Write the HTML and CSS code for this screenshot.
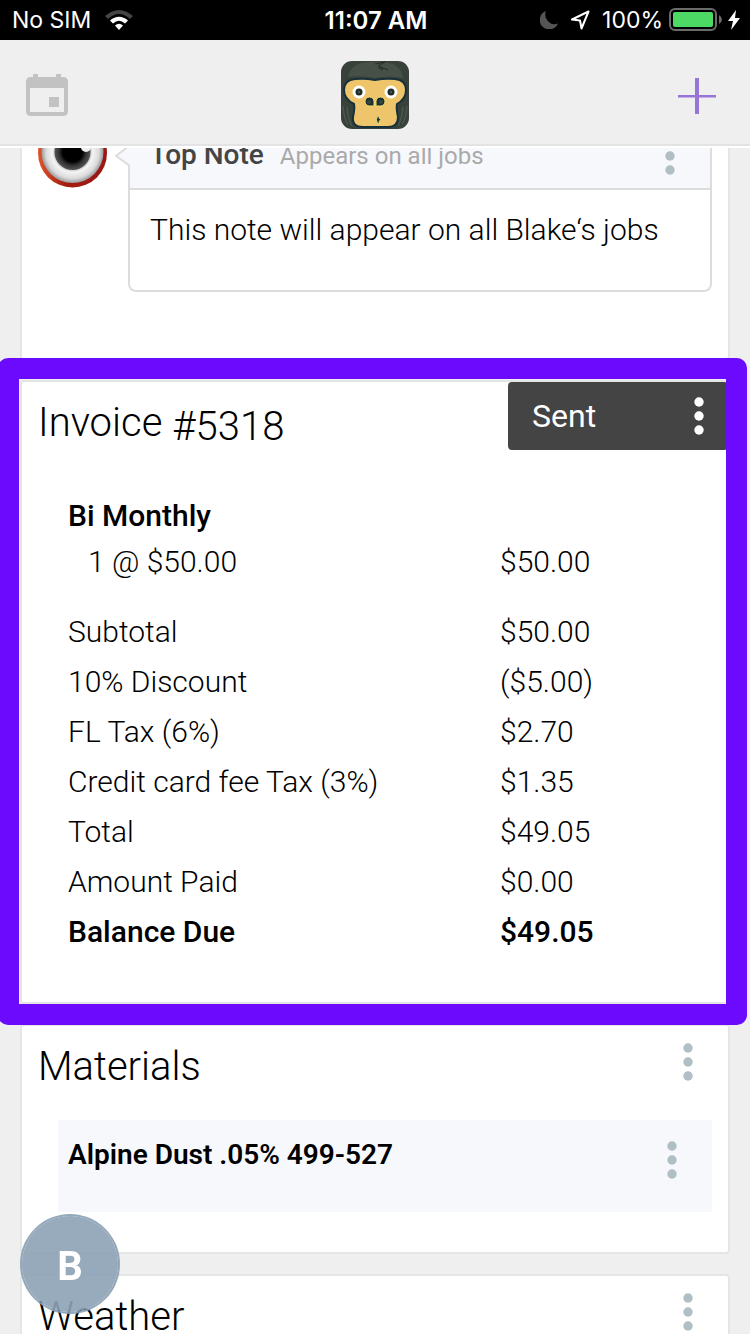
FILE: index.html
```html
<!DOCTYPE html>
<html lang="en">
<head>
    <meta charset="UTF-8">
    <meta name="viewport" content="width=device-width, initial-scale=1.0">
    <title>Job - Invoice #5318</title>
    <link rel="stylesheet" href="styles.css">
</head>
<body>
    <header class="top">
        <div class="status-bar">
            <div class="status-left">
                <span>No SIM</span>
                <svg width="28" height="21" viewBox="0 0 28 21">
                    <path d="M0 6 Q14 -6 28 6 L25 9 Q14 -1 3 9 Z" fill="#444"/>
                    <path d="M5 10.500 Q14 3 23 10.500 L20 13.500 Q14 8 8 13.500 Z" fill="#fff"/>
                    <path d="M10 15.500 Q14 12 18 15.500 L14 20 Z" fill="#fff"/>
                </svg>
            </div>
            <div class="status-time">11:07 AM</div>
            <div class="status-right">
                <svg class="moon" width="18" height="18" viewBox="0 0 18 18">
                    <path d="M6 0 A9.500 9.500 0 1 0 18 12.500 A9.500 9.500 0 0 1 6 0 Z" fill="#555"/>
                </svg>
                <svg width="20" height="20" viewBox="0 0 20 20">
                    <path d="M18.500 1.500 L2 9.500 L10 10.500 L11.500 18.500 Z" fill="none" stroke="#fff" stroke-width="2" stroke-linejoin="round"/>
                </svg>
                <span class="battery-level">100%</span>
                <svg width="53" height="24" viewBox="0 0 53 24">
                    <rect x="1" y="1" width="46" height="21" rx="5" fill="none" stroke="#6b6b6b" stroke-width="2"/>
                    <rect x="4" y="4" width="40" height="15" rx="2" fill="#4cd964"/>
                    <path d="M50 7 Q53 9 53 11.500 Q53 14 50 16 Z" fill="#6b6b6b"/>
                </svg>
                <svg width="12" height="20" viewBox="0 0 12 20">
                    <path d="M8 0 L0 11 H5 L3 20 L12 8 H7 Z" fill="#fff"/>
                </svg>
            </div>
        </div>
        <nav class="app-bar">
            <button class="icon-button" type="button" aria-label="Calendar">
                <svg width="42" height="42" viewBox="0 0 42 42" fill="#c2c2c2">
                    <path fill-rule="evenodd" d="M7 0 H12 V3 H30 V0 H35 V3 H37 Q42 3 42 8 V37 Q42 42 37 42 H5 Q0 42 0 37 V8 Q0 3 5 3 H7 Z M4 14 V38 H38 V14 Z"/>
                    <rect x="23" y="23" width="10" height="10"/>
                </svg>
            </button>
            <a class="logo" href="#" aria-label="Home">
                <svg width="68" height="68" viewBox="0 0 68 68">
                    <rect width="68" height="68" rx="11" fill="#38423a"/>
                    <path d="M7 16 Q10 1 30 1 H42 Q60 2 62 17 Q50 14 34 17 Q18 14 7 16 Z" fill="#475047"/>
                    <path d="M2 45 Q3 58 7 63 M6 46 Q7 58 11 65 M66 45 Q65 58 61 63 M62 46 Q61 58 57 65" fill="none" stroke="#4c564d" stroke-width="1.500"/>
                    <path d="M34 3 L44 1 L37 5 L47 9 M37 7 L42 8 L40 10" fill="none" stroke="#262d2a" stroke-width="1"/>
                    <path d="M14 18 Q24 17 34 19 Q44 17 54 18 Q65 19 65 29 Q65 38 56 43 Q55 47 57 56 Q57 66 47 66 H22 Q11 66 12 56 Q14 47 13 43 Q3 38 3 29 Q3 19 14 18 Z" fill="#eec56b" stroke="#17313c" stroke-width="2"/>
                    <circle cx="18" cy="31" r="6.500" fill="#fff"/>
                    <circle cx="50" cy="31" r="6.500" fill="#fff"/>
                    <circle cx="18" cy="31" r="3.500" fill="#202c29"/>
                    <circle cx="50" cy="31" r="3.500" fill="#202c29"/>
                    <circle cx="18" cy="31" r="1" fill="#5b6662"/>
                    <circle cx="50" cy="31" r="1" fill="#5b6662"/>
                    <path d="M33 45 H28.500 A4.500 4.500 0 1 1 33 40.500 Z M35 45 H39.500 A4.500 4.500 0 1 0 35 40.500 Z" fill="#1d3135" stroke="#f3e16d" stroke-width="1"/>
                    <circle cx="28" cy="41" r="2" fill="#38453f"/>
                    <circle cx="40" cy="41" r="2" fill="#38453f"/>
                    <path d="M39 54.500 A4.300 4.300 0 0 0 39 63 L38 60.500 L40 58.500 L38 57 Z" fill="#1d3135" stroke="#f3e16d" stroke-width="1"/>
                </svg>
            </a>
            <button class="icon-button add-button" type="button" aria-label="Add">
                <svg width="38" height="38" viewBox="0 0 38 38" fill="#9775d6">
                    <rect x="17" y="2" width="4" height="36"/>
                    <rect x="0" y="19" width="38" height="2.500"/>
                </svg>
            </button>
        </nav>
    </header>

    <main class="content">
        <section class="card note-card">
            <svg class="note-avatar" width="70" height="70" viewBox="0 0 70 70">
                <defs>
                    <radialGradient id="ball">
                        <stop offset="0.500" stop-color="#999"/>
                        <stop offset="0.650" stop-color="#f4f4f4"/>
                        <stop offset="0.850" stop-color="#dcdcdc"/>
                        <stop offset="1" stop-color="#9a9a9a"/>
                    </radialGradient>
                    <radialGradient id="pupil">
                        <stop offset="0.550" stop-color="#000"/>
                        <stop offset="0.750" stop-color="#333"/>
                        <stop offset="1" stop-color="#555"/>
                    </radialGradient>
                    <linearGradient id="rim">
                        <stop offset="0" stop-color="#e0552c"/>
                        <stop offset="0.400" stop-color="#a31c0e"/>
                        <stop offset="1" stop-color="#9a1717"/>
                    </linearGradient>
                </defs>
                <circle cx="34.500" cy="35" r="34.500" fill="url(#rim)"/>
                <circle cx="34.500" cy="34" r="31" fill="url(#ball)"/>
                <circle cx="34.500" cy="34" r="18" fill="url(#pupil)"/>
                <circle cx="48" cy="29" r="5" fill="#eee"/>
            </svg>
            <article class="note">
                <svg class="note-arrow" width="16" height="24" viewBox="0 0 16 24">
                    <path d="M16 1 L2 12 L16 22" fill="#f7f8fc" stroke="#dcdcdc" stroke-width="2"/>
                </svg>
                <div class="note-header">
                    <h3 class="note-title">Top Note</h3>
                    <span class="note-hint">Appears on all jobs</span>
                    <button class="dots" type="button" aria-label="Note options">
                        <svg width="10" height="38" viewBox="0 0 10 38"><circle cx="5" cy="5" r="4.700"/><circle cx="5" cy="19" r="4.700"/><circle cx="5" cy="33" r="4.700"/></svg>
                    </button>
                </div>
                <p class="note-text">This note will appear on all Blake‘s jobs</p>
            </article>
        </section>

        <section class="card invoice-card">
            <div class="card-header">
                <h2 class="card-title">Invoice</h2>
                <span class="invoice-number">#5318</span>
                <button class="status-button" type="button">
                    Sent
                    <svg width="10" height="38" viewBox="0 0 10 38"><circle cx="5" cy="5" r="4.700"/><circle cx="5" cy="19" r="4.700"/><circle cx="5" cy="33" r="4.700"/></svg>
                </button>
            </div>
            <table class="invoice-table">
                <colgroup>
                    <col>
                    <col class="amount-column">
                </colgroup>
                <tbody class="invoice-items">
                    <tr class="strong"><th colspan="2">Bi Monthly</th></tr>
                    <tr><td class="quantity">1 @ $50.00</td><td>$50.00</td></tr>
                </tbody>
                <tbody class="invoice-totals">
                    <tr><th>Subtotal</th><td>$50.00</td></tr>
                    <tr><th>10% Discount</th><td>($5.00)</td></tr>
                    <tr><th>FL Tax (6%)</th><td>$2.70</td></tr>
                    <tr><th>Credit card fee Tax (3%)</th><td>$1.35</td></tr>
                    <tr><th>Total</th><td>$49.05</td></tr>
                    <tr><th>Amount Paid</th><td>$0.00</td></tr>
                    <tr class="strong"><th>Balance Due</th><td>$49.05</td></tr>
                </tbody>
            </table>
            <div class="highlight"></div>
        </section>

        <section class="card">
            <div class="card-header">
                <h2 class="card-title">Materials</h2>
                <button class="dots" type="button" aria-label="Materials options">
                    <svg width="10" height="38" viewBox="0 0 10 38"><circle cx="5" cy="5" r="4.700"/><circle cx="5" cy="19" r="4.700"/><circle cx="5" cy="33" r="4.700"/></svg>
                </button>
            </div>
            <div class="material">
                <span class="material-name">Alpine Dust .05% 499-527</span>
                <button class="dots" type="button" aria-label="Alpine Dust options">
                    <svg width="10" height="38" viewBox="0 0 10 38"><circle cx="5" cy="5" r="4.700"/><circle cx="5" cy="19" r="4.700"/><circle cx="5" cy="33" r="4.700"/></svg>
                </button>
            </div>
        </section>

        <section class="card">
            <div class="card-header">
                <h2 class="card-title">Weather</h2>
                <button class="dots" type="button" aria-label="Weather options">
                    <svg width="10" height="38" viewBox="0 0 10 38"><circle cx="5" cy="5" r="4.700"/><circle cx="5" cy="19" r="4.700"/><circle cx="5" cy="33" r="4.700"/></svg>
                </button>
            </div>
        </section>
    </main>

    <button class="user-badge" type="button">B</button>
</body>
</html>
```
FILE: styles.css
```css
* {
    box-sizing: border-box;
}
body {
    margin: 0;
    height: 100vh;
    overflow: hidden;
    display: flex;
    flex-direction: column;
    background: #efefef;
    color: #000;
    font-family: Roboto, sans-serif;
    font-size: 30px;
    font-weight: 300;
}
h2, h3, p {
    margin: 0;
}
button {
    border: 0;
    padding: 0;
    background: none;
    font-family: inherit;
}
svg {
    display: block;
    flex: none;
}

/* top bars */
.top {
    flex: none;
    border-bottom: 2px solid #fff;
}
.status-bar {
    display: grid;
    grid-template-columns: 1fr auto 1fr;
    align-items: center;
    height: 40px;
    padding: 0 10px 0 12px;
    background: #000;
    color: #fff;
    font-family: Inter, sans-serif;
    font-size: 23px;
    font-weight: 400;
}
.status-left, .status-right {
    display: flex;
    align-items: center;
    gap: 14px;
}
.status-right {
    justify-content: flex-end;
    gap: 6px;
}
.moon {
    margin-right: 6px;
}
.battery-level {
    margin-left: 6px;
}
.status-time {
    font-size: 24px;
    font-weight: 600;
}
.app-bar {
    display: grid;
    grid-template-columns: 1fr auto 1fr;
    align-items: center;
    height: 106px;
    padding: 6px 26px 0;
    border-bottom: 2px solid #e3e3e3;
}
.add-button {
    justify-self: end;
    margin-right: 8px;
}

/* cards */
.content {
    flex: 1;
    min-height: 0;
    overflow: hidden;
    padding: 0 20px;
}
.card {
    position: relative;
    margin-bottom: 20px;
    border: 2px solid #e5e5e5;
    border-radius: 4px;
    background: #fff;
}
.card-header {
    display: flex;
    align-items: center;
    height: 80px;
    padding-left: 16px;
}
.card-title, .invoice-number {
    font-size: 40px;
    font-weight: 300;
}
.dots {
    display: flex;
    align-items: center;
    justify-content: center;
    align-self: flex-start;
    width: 80px;
    height: 72px;
    margin-left: auto;
    fill: #b0bec5;
}

/* note */
.note-card {
    display: flex;
    gap: 20px;
    margin-top: -60px;
    padding: 28px 16px 66px;
}
.note {
    position: relative;
    flex: 1;
    border: 2px solid #dcdcdc;
    border-radius: 8px;
}
.note-arrow {
    position: absolute;
    top: 24px;
    left: -16px;
}
.note-header {
    display: flex;
    align-items: baseline;
    height: 70px;
    padding-left: 20px;
    border-bottom: 2px solid #dcdcdc;
    background: #f7f8fc;
    line-height: 70px;
}
.note-title {
    margin-right: 16px;
    color: #444;
    font-size: 28px;
    font-weight: 500;
}
.note-hint {
    color: #aaa;
    font-size: 24px;
    font-weight: 400;
}
.note-text {
    padding: 20px 20px 40px;
    line-height: 40px;
}

/* invoice */
.invoice-card {
    z-index: 1;
    padding-bottom: 46px;
}
.invoice-number {
    margin-left: 10px;
    padding-top: 8px;
}
.status-button {
    display: flex;
    align-items: center;
    justify-content: space-between;
    align-self: flex-start;
    width: 220px;
    height: 68px;
    margin-left: auto;
    padding: 0 24px;
    border-radius: 4px;
    background: #444;
    color: #fff;
    fill: #fff;
    font-size: 32px;
    font-weight: 400;
}
.invoice-table {
    width: 100%;
    margin-top: 30px;
    border-spacing: 0;
    table-layout: fixed;
}
.amount-column {
    width: 228px;
}
.invoice-table th, .invoice-table td {
    height: 50px;
    padding: 0 0 0 46px;
    font-weight: 300;
    text-align: left;
}
.invoice-table td:last-child {
    padding-left: 0;
}
.invoice-table .invoice-items th {
    height: 46px;
}
.invoice-table .invoice-items td {
    height: 68px;
    padding-bottom: 22px;
}
.invoice-table .quantity {
    padding-left: 66px;
}
.invoice-table .strong th, .invoice-table .strong td {
    font-weight: 500;
}
.highlight {
    position: absolute;
    top: -24px;
    right: -19px;
    bottom: -23px;
    left: -24px;
    border: 21px solid #6b0afd;
    border-radius: 10px;
    pointer-events: none;
}

/* materials */
.material {
    display: flex;
    align-items: flex-start;
    height: 92px;
    margin: 14px 16px 40px 36px;
    padding-left: 10px;
    background: #f7f8fc;
}
.material-name {
    font-size: 28px;
    font-weight: 600;
    line-height: 70px;
}
.material .dots {
    height: 80px;
}

.user-badge {
    position: fixed;
    left: 20px;
    bottom: 20px;
    width: 100px;
    height: 100px;
    padding-top: 4px;
    border: 2px solid rgba(135, 158, 178, 0.9);
    border-radius: 50%;
    background: rgba(141, 162, 182, 0.9);
    background-clip: padding-box;
    color: #fff;
    font-size: 40px;
    font-weight: 700;
    z-index: 2;
}
```
